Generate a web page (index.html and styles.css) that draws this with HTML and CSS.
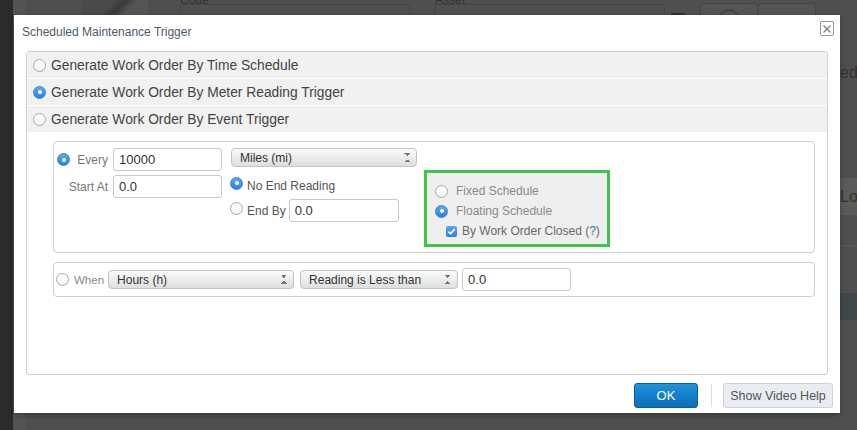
FILE: index.html
```html
<!DOCTYPE html>
<html lang="en">
<head>
  <meta charset="UTF-8">
  <title>Scheduled Maintenance Trigger</title>
  <link rel="stylesheet" href="styles.css">
</head>
<body>
  <!-- dimmed page behind the dialog -->
  <div class="backdrop">
    <div class="side"></div>
    <div class="page">
      <div class="page-top">
        <div class="thumb"></div>
        <div class="field"><span class="lbl">Code</span><div class="fake-input"></div></div>
        <div class="field"><span class="lbl">Asset</span><div class="fake-input"></div></div>
        <div class="mini"></div>
        <div class="fake-btn"><span class="ring"></span></div>
        <div class="fake-btn"></div>
      </div>
      <div class="page-right">
        <div class="r-ed">ed</div>
        <div class="r-band">Lo</div>
        <div class="r-line"></div>
        <div class="r-dark"></div>
      </div>
    </div>
  </div>

  <div class="dialog">
    <div class="dlg-head">
      <div class="dlg-title">Scheduled Maintenance Trigger</div>
      <div class="dlg-close">
        <svg width="8" height="8" viewBox="0 0 8 8"><path d="M0.5 0.5 L7.5 7.5 M7.5 0.5 L0.5 7.5" stroke="#777" stroke-width="1.1"/></svg>
      </div>
    </div>

    <div class="panel">
      <div class="opt-row"><span class="radio"></span>Generate Work Order By Time Schedule</div>
      <div class="opt-row"><span class="radio on"></span>Generate Work Order By Meter Reading Trigger</div>
      <div class="opt-row"><span class="radio"></span>Generate Work Order By Event Trigger</div>

      <div class="panel-body">
        <div class="box box-every">
          <div class="col-left">
            <div class="lbl-cell first"><span class="radio on"></span><span>Every</span></div>
            <div class="input">10000</div>
            <div class="lbl-cell"><span>Start At</span></div>
            <div class="input">0.0</div>
          </div>

          <div class="col-mid">
            <div class="select wide">Miles (mi)<span class="arrows"></span></div>
            <div class="end-row top"><span class="radio on"></span>No End Reading</div>
            <div class="end-row"><span class="radio"></span>End By <div class="input">0.0</div></div>
          </div>

          <div class="sched-box">
            <div class="sched-row"><span class="radio"></span>Fixed Schedule</div>
            <div class="sched-row"><span class="radio on"></span>Floating Schedule</div>
            <div class="sched-row check-row">
              <span class="check">
                <svg width="11" height="11" viewBox="0 0 11 11"><path d="M2.5 5.6 L4.6 7.8 L8.6 3" fill="none" stroke="#fff" stroke-width="1.7"/></svg>
              </span>
              By Work Order Closed (<span class="help">?</span>)
            </div>
          </div>
        </div>

        <div class="box box-when">
          <span class="radio"></span>
          <span class="when">When</span>
          <div class="select wide">Hours (h)<span class="arrows"></span></div>
          <div class="select narrow">Reading is Less than<span class="arrows"></span></div>
          <div class="input">0.0</div>
        </div>
      </div>
    </div>

    <div class="dlg-foot">
      <button class="btn-ok">OK</button>
      <span class="foot-sep"></span>
      <button class="btn-help">Show Video Help</button>
    </div>
  </div>
</body>
</html>
```

FILE: styles.css
```css
body {
  margin: 0;
  width: 857px;
  height: 430px;
  overflow: hidden;
  position: relative;
  background: #4f4f4f;
  font-family: "Liberation Sans", Arial, sans-serif;
}

/* ---------- dimmed page ---------- */

.backdrop {
  display: flex;
  height: 430px;
}

.side {
  width: 13px;
  background: #2b2b2c;
}

.page {
  flex: 1;
  position: relative;
  background: linear-gradient(to right, #525252 0, #555 12px, #4f4f4f 12px);
}

.page-top {
  display: flex;
  align-items: flex-start;
  padding-left: 69px;
  height: 15px;
  overflow: hidden;
}

.thumb {
  width: 66px;
  height: 15px;
  background: linear-gradient(135deg, #4a4a4a 40%, #3a3a3a 55%, #555 70%);
}

.field {
  display: flex;
  flex-direction: column;
  margin-left: 32px;
}

.field + .field {
  margin-left: 25px;
}

.lbl {
  font-size: 12px;
  color: #333;
  line-height: 6px;
  margin-top: -3px;
  height: 7px;
}

.fake-input {
  width: 228px;
  height: 14px;
  border: 1px solid #444;
  border-radius: 3px;
  background: #505050;
}

.mini {
  width: 14px;
  height: 4px;
  background: #333;
  margin: 13px 0 0 6px;
}

.fake-btn {
  width: 56px;
  height: 16px;
  margin-top: 3px;
  border: 1px solid #464646;
  border-radius: 4px;
  background: #555;
}

.mini + .fake-btn {
  margin-left: 15px;
}

.ring {
  display: block;
  width: 18px;
  height: 18px;
  margin: 5px 0 0 17px;
  border: 2px solid #3e4a3a;
  border-radius: 50%;
}

.page-right {
  position: absolute;
  right: 0;
  top: 0;
  width: 17px;
  height: 430px;
}

.r-ed {
  position: absolute;
  top: 64px;
  left: 0;
  font-size: 16px;
  color: #333;
}

.r-band {
  position: absolute;
  top: 178px;
  left: 0;
  right: 0;
  height: 37px;
  background: #5b5b5b;
  font-size: 16px;
  line-height: 37px;
  color: #333;
  overflow: hidden;
}

.r-line {
  position: absolute;
  top: 245px;
  left: 0;
  right: 0;
  height: 1px;
  background: #5a5a5a;
}

.r-dark {
  position: absolute;
  top: 293px;
  left: 0;
  right: 0;
  height: 27px;
  background: #42474a;
}

/* ---------- dialog ---------- */

.dialog {
  position: absolute;
  left: 14px;
  top: 15px;
  width: 826px;
  height: 398px;
  background: #fff;
  display: flex;
  flex-direction: column;
  box-shadow: 0 2px 6px rgba(0, 0, 0, 0.3);
}

.dlg-head {
  height: 36px;
  display: flex;
  justify-content: space-between;
  align-items: flex-start;
  padding: 0 6px 0 8px;
}

.dlg-title {
  font-size: 12px;
  color: #4f586b;
  margin-top: 10px;
}

.dlg-close {
  width: 12px;
  height: 13px;
  margin-top: 6px;
  border: 1px solid #999;
  border-radius: 2px;
  display: flex;
  align-items: center;
  justify-content: center;
}

.panel {
  margin: 0 12px;
  height: 324px;
  box-sizing: border-box;
  border: 1px solid #cfcfcf;
  border-radius: 3px;
}

.opt-row {
  height: 26px;
  border-bottom: 1px solid #fff;
  background: #f1f1f1;
  display: flex;
  align-items: center;
  padding-left: 6px;
  font-size: 13.8px;
  color: #444;
}

.opt-row:last-of-type {
  border-bottom: none;
}

.opt-row .radio {
  margin-right: 5px;
}

/* radios */
.radio {
  flex: none;
  width: 13px;
  height: 13px;
  box-sizing: border-box;
  border: 1px solid #a9a9a9;
  border-radius: 50%;
  background: linear-gradient(#fff, #f3f3f3);
  display: inline-flex;
  align-items: center;
  justify-content: center;
}

.radio.on {
  border-color: #2f83e0;
  background: linear-gradient(#5aa9f5, #2c7fe0);
}

.radio.on::after {
  content: '';
  width: 4px;
  height: 4px;
  border-radius: 50%;
  background: #fff;
}

.panel-body {
  padding: 8px 12px 0 26px;
}

.box {
  border: 1px solid #cfcfcf;
  border-radius: 4px;
  box-sizing: border-box;
}

.input {
  width: 109px;
  height: 23px;
  box-sizing: border-box;
  border: 1px solid #c9c9c9;
  border-radius: 3px;
  background: #fff;
  font-size: 13px;
  color: #333;
  padding-left: 5px;
  display: flex;
  align-items: center;
}

.select {
  position: relative;
  height: 18px;
  box-sizing: border-box;
  border: 1px solid #c4c4c4;
  border-radius: 4px;
  background: linear-gradient(#fbfbfb, #dedede);
  font-size: 12px;
  color: #333;
  padding-left: 8px;
  display: flex;
  align-items: center;
}

.select.wide {
  width: 186px;
}

.select.narrow {
  width: 158px;
}

.arrows {
  position: absolute;
  right: 6px;
  top: 4px;
  width: 6px;
  height: 9px;
  background:
    linear-gradient(to top right, transparent 50%, #777 50%) 0 0 / 3px 3px no-repeat,
    linear-gradient(to top left, transparent 50%, #777 50%) 3px 0 / 3px 3px no-repeat,
    linear-gradient(to bottom right, transparent 50%, #777 50%) 0 6px / 3px 3px no-repeat,
    linear-gradient(to bottom left, transparent 50%, #777 50%) 3px 6px / 3px 3px no-repeat;
}

.box-every {
  height: 112px;
  padding: 6px 0 0 3px;
  display: flex;
  align-items: flex-start;
}

.col-left {
  display: grid;
  grid-template-columns: 56px 109px;
  row-gap: 4px;
}

.lbl-cell {
  display: flex;
  align-items: center;
  justify-content: flex-end;
  padding-right: 5px;
  font-size: 12px;
  color: #777;
}

.lbl-cell.first {
  justify-content: space-between;
}

.col-mid {
  margin-left: 8px;
  display: flex;
  flex-direction: column;
}

.col-mid .select {
  margin-left: 1px;
  height: 19px;
}

.end-row {
  display: flex;
  align-items: center;
  font-size: 12px;
  color: #555;
  height: 23px;
}

.end-row .radio {
  margin-right: 4px;
  position: relative;
  top: -2px;
}

.end-row.top {
  margin-top: 8px;
  height: 22px;
  margin-bottom: 2px;
}

.end-row.top .radio {
  top: -3px;
}

.end-row .input {
  width: 110px;
  height: 23px;
  margin-left: 3px;
}

.sched-box {
  margin: 22px 0 0 7px;
  width: 186px;
  height: 77px;
  box-sizing: border-box;
  border: 3px solid #41c449;
  background: #efefef;
  padding: 8px 0 0 8px;
}

.sched-row {
  height: 20px;
  display: flex;
  align-items: center;
  font-size: 12px;
  color: #8a8a8a;
}

.sched-row .radio {
  margin-right: 8px;
}

.check-row {
  padding-left: 11px;
  color: #6a6a6a;
}

.check {
  width: 11px;
  height: 11px;
  border-radius: 2px;
  background: linear-gradient(#5aa9f5, #2c7fe0);
  margin-right: 5px;
  display: inline-flex;
}

.help {
  color: #2f74c0;
}

.box-when {
  margin-top: 9px;
  height: 35px;
  display: flex;
  align-items: center;
  padding-left: 2px;
}

.box-when .select {
  height: 19px;
}

.when {
  font-size: 11.5px;
  color: #888;
  margin: 0 4px 0 5px;
}

.box-when .select.narrow {
  margin-left: 6px;
}

.box-when .input {
  margin-left: 4px;
}

.dlg-foot {
  flex: 1;
  display: flex;
  justify-content: flex-end;
  align-items: flex-start;
  padding: 8px 7px 0 0;
}

.btn-ok {
  width: 64px;
  height: 25px;
  border: 1px solid #0a5d9e;
  border-radius: 3px;
  background: linear-gradient(#1f93dc, #0b6db9);
  color: #fff;
  font-family: inherit;
  font-size: 13px;
}

.foot-sep {
  width: 1px;
  height: 23px;
  margin: 1px 11px 0 13px;
  background: #ddd;
}

.btn-help {
  width: 110px;
  height: 25px;
  border: 1px solid #cdd3da;
  border-radius: 3px;
  background: #e9edf2;
  color: #555;
  font-family: inherit;
  font-size: 12.5px;
  padding: 0;
}
```
